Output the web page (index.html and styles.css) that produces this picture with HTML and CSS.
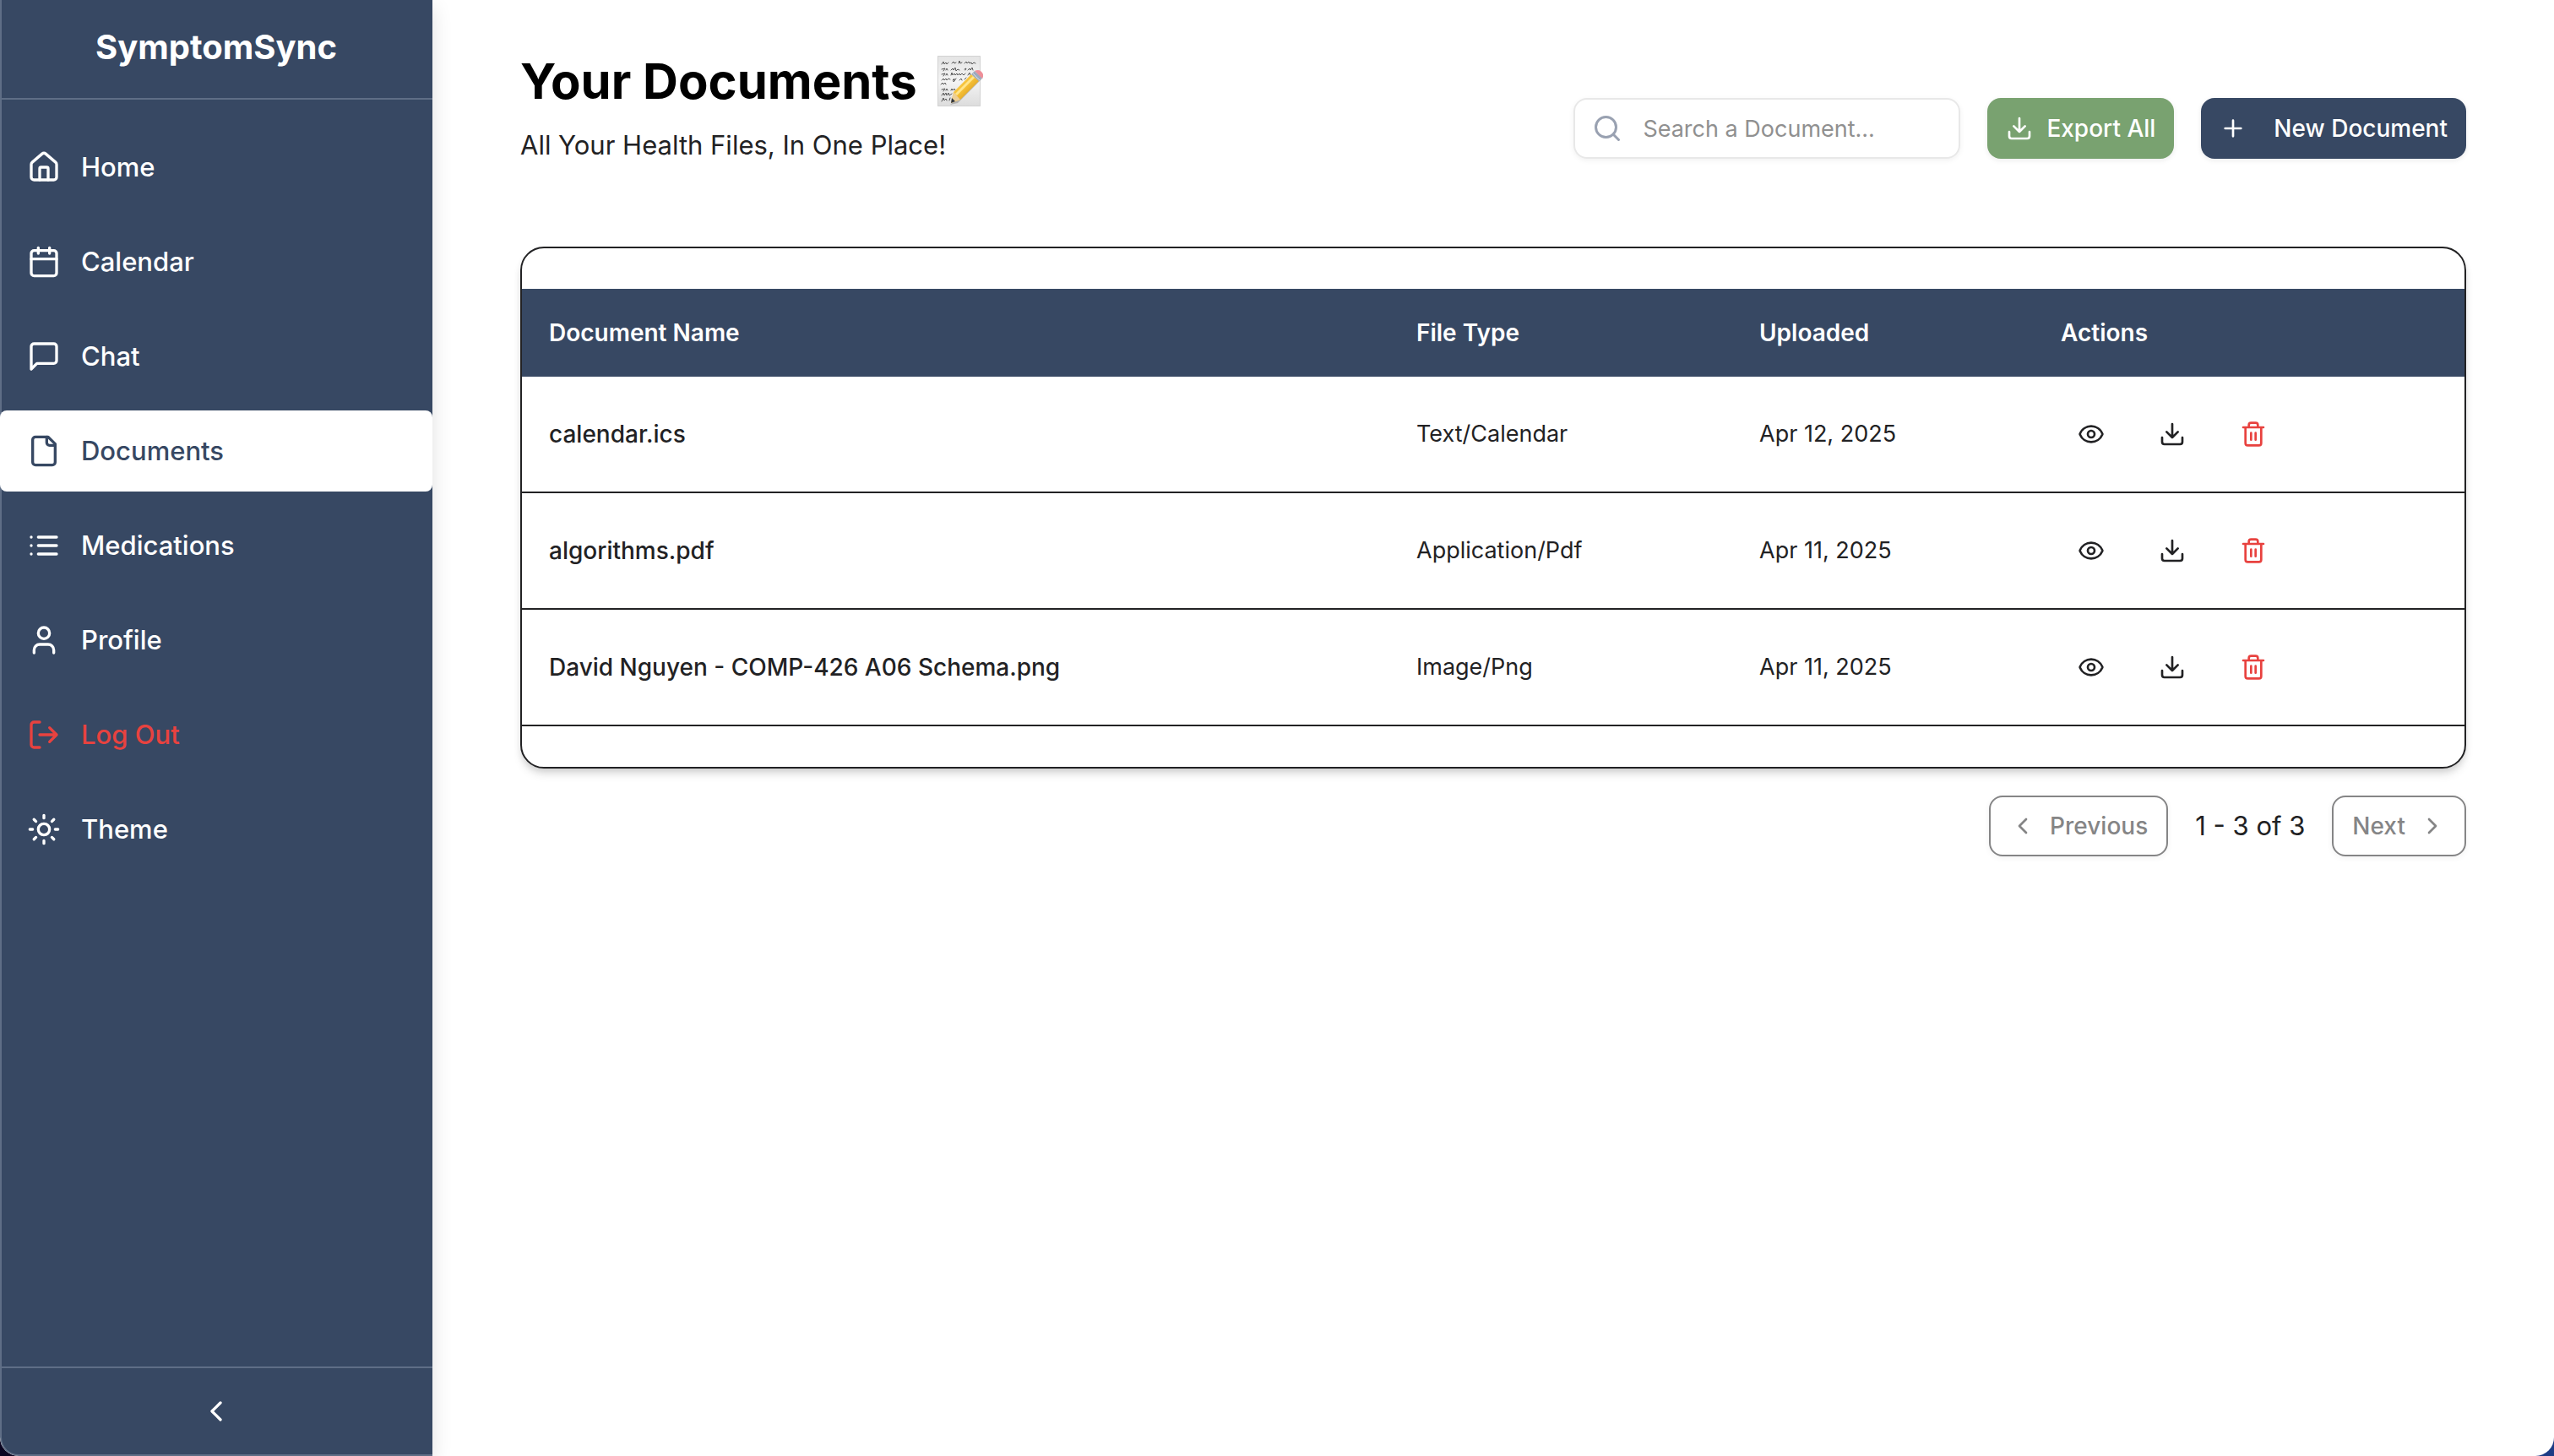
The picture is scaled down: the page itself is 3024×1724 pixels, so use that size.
FILE: index.html
```html
<!DOCTYPE html>
<html lang="en">
<head>
  <meta charset="utf-8">
  <meta name="viewport" content="width=device-width, initial-scale=1">
  <title>SymptomSync – Your Documents</title>
  <link rel="stylesheet" href="styles.css">
</head>
<body>
  <svg class="sprite" aria-hidden="true">
    <symbol id="home" viewBox="0 0 24 24"><path d="M15 21v-8a1 1 0 0 0-1-1h-4a1 1 0 0 0-1 1v8"/><path d="M3 10a2 2 0 0 1 .709-1.528l7-5.999a2 2 0 0 1 2.582 0l7 5.999A2 2 0 0 1 21 10v9a2 2 0 0 1-2 2H5a2 2 0 0 1-2-2z"/></symbol>
    <symbol id="calendar" viewBox="0 0 24 24"><path d="M8 2v4M16 2v4M3 10h18"/><rect x="3" y="4" width="18" height="18" rx="2"/></symbol>
    <symbol id="chat" viewBox="0 0 24 24"><path d="M21 15a2 2 0 0 1-2 2H7l-4 4V5a2 2 0 0 1 2-2h14a2 2 0 0 1 2 2z"/></symbol>
    <symbol id="file" viewBox="0 0 24 24"><path d="M15 2H6a2 2 0 0 0-2 2v16a2 2 0 0 0 2 2h12a2 2 0 0 0 2-2V7Z"/><path d="M14 2v4a2 2 0 0 0 2 2h4"/></symbol>
    <symbol id="list" viewBox="0 0 24 24"><path d="M3 12h.01M3 18h.01M3 6h.01M8 12h13M8 18h13M8 6h13"/></symbol>
    <symbol id="user" viewBox="0 0 24 24"><path d="M19 21v-2a4 4 0 0 0-4-4H9a4 4 0 0 0-4 4v2"/><circle cx="12" cy="7" r="4"/></symbol>
    <symbol id="logout" viewBox="0 0 24 24"><path d="M9 21H5a2 2 0 0 1-2-2V5a2 2 0 0 1 2-2h4M16 17l5-5-5-5M21 12H9"/></symbol>
    <symbol id="sun" viewBox="0 0 24 24"><circle cx="12" cy="12" r="4"/><path d="M12 2v2M12 20v2M4.93 4.93l1.41 1.41M17.66 17.66l1.41 1.41M2 12h2M20 12h2M6.34 17.66l-1.41 1.41M19.07 4.93l-1.41 1.41"/></symbol>
    <symbol id="left" viewBox="0 0 24 24"><path d="m15 18-6-6 6-6"/></symbol>
    <symbol id="right" viewBox="0 0 24 24"><path d="m9 18 6-6-6-6"/></symbol>
    <symbol id="search" viewBox="0 0 24 24"><circle cx="11" cy="11" r="8"/><path d="m21 21-4.3-4.3"/></symbol>
    <symbol id="download" viewBox="0 0 24 24"><path d="M21 15v4a2 2 0 0 1-2 2H5a2 2 0 0 1-2-2v-4M7 10l5 5 5-5M12 15V3"/></symbol>
    <symbol id="plus" viewBox="0 0 24 24"><path d="M5 12h14M12 5v14"/></symbol>
    <symbol id="eye" viewBox="0 0 24 24"><path d="M2.062 12.348a1 1 0 0 1 0-.696 10.75 10.75 0 0 1 19.876 0 1 1 0 0 1 0 .696 10.75 10.75 0 0 1-19.876 0"/><circle cx="12" cy="12" r="3"/></symbol>
    <symbol id="trash" viewBox="0 0 24 24"><path d="M3 6h18M19 6v14a2 2 0 0 1-2 2H7a2 2 0 0 1-2-2V6M8 6V4a2 2 0 0 1 2-2h4a2 2 0 0 1 2 2v2M10 11v6M14 11v6"/></symbol>
  </svg>

  <div class="app">
    <aside class="sidebar">
      <div class="brand">SymptomSync</div>
      <nav class="nav">
        <a class="nav-item" href="#home"><svg class="icon icon-lg"><use href="#home"/></svg>Home</a>
        <a class="nav-item" href="#calendar"><svg class="icon icon-lg"><use href="#calendar"/></svg>Calendar</a>
        <a class="nav-item" href="#chat"><svg class="icon icon-lg"><use href="#chat"/></svg>Chat</a>
        <a class="nav-item active" href="#documents" aria-current="page"><svg class="icon icon-lg"><use href="#file"/></svg>Documents</a>
        <a class="nav-item" href="#medications"><svg class="icon icon-lg"><use href="#list"/></svg>Medications</a>
        <a class="nav-item" href="#profile"><svg class="icon icon-lg"><use href="#user"/></svg>Profile</a>
        <button class="nav-item danger" type="button"><svg class="icon icon-lg"><use href="#logout"/></svg>Log Out</button>
        <button class="nav-item" type="button"><svg class="icon icon-lg"><use href="#sun"/></svg>Theme</button>
      </nav>
      <button class="collapse" type="button" aria-label="Collapse sidebar"><svg class="icon icon-lg"><use href="#left"/></svg></button>
    </aside>

    <main class="main">
      <header class="page-header">
        <div>
          <h1 class="title">Your Documents
            <svg class="memo" viewBox="0 0 54 60" role="img" aria-label="Memo">
              <defs>
                <linearGradient id="paper" x1="0" y1="0" x2="0" y2="1"><stop offset="0" stop-color="#e4e4e4"/><stop offset=".5" stop-color="#f4f4f4"/><stop offset="1" stop-color="#dcdcdc"/></linearGradient>
                <linearGradient id="wood" x1="0" y1="0" x2="1" y2="1"><stop offset="0" stop-color="#ffdc63"/><stop offset=".5" stop-color="#f4bd33"/><stop offset="1" stop-color="#b9801a"/></linearGradient>
              </defs>
              <path d="M0 0h51v60H0z" fill="url(#paper)"/>
              <path d="M.5.5h50v59H.5z" fill="none" stroke="#d2d2d2"/>
              <g fill="none" stroke="#555" stroke-width="1" stroke-linecap="round" stroke-linejoin="round">
                <path d="M5 10l2-3 1 3 2-2 1 2 2-2M17 9l2-2 1 2 2-1M25 9l1-3 1 3 2-1M32 9l2-2 1 2 2-2 1 2 2-1 1 2 2-2 2 1"/>
                <path d="M5 16l4-1-2 3M10 17l1-2 1 2M16 17l2-2 1 2 2-3 1 4 2-2 2 1M32 16l2-1-1 2M36 17l2-2 1 2 2-3 1 3"/>
                <path d="M5 22l4-1-2 3M10 23l1-2 1 2M16 23l1-3 1 3 2-2 1 2 2-2 1 2 2-2 1 2 2-2 2 2 2-2M36 23l2-3 1 3"/>
                <path d="M5 29l2-2 1 2 2-2 1 2 2-2 2 1M18 29l2-2-1 4 3-4M26 29l2-2 1 2M32 28l2-2"/>
                <path d="M4 34l2-2 1 2 2-2 1 2"/>
                <path d="M5 40l4-1-2 3M10 41l1-2 1 2M16 41l1-2 1 2 2-2 1 2"/>
                <path d="M5 47l2-3 1 3 2-3 1 3 2-3 1 3 3-2"/>
                <path d="M5 54l2-4 1 3 2-2 1 2M14 53l1-3"/>
              </g>
              <path d="M15 58l9-2 30-30-5 1z" fill="#777" opacity=".45"/>
              <path d="M16 56l3-13L40 22l9 8-22 22z" fill="url(#wood)"/>
              <path d="M22 46l21-21" stroke="#ffe58b" stroke-width="3"/>
              <path d="M16 56l3-13 8 9z" fill="#edcf98"/>
              <path d="M16 56l1-6 4 4z" fill="#30363f"/>
              <path d="M40 22l4-4 9 8-4 4z" fill="#9eabbd"/>
              <path d="M42 21l8 8" stroke="#d6dde7" stroke-width="1"/>
              <path d="M44 18q4-2 7 0 4 3 3 7l-1 2z" fill="#ee8f99"/>
            </svg>
          </h1>
          <p class="subtitle">All Your Health Files, In One Place!</p>
        </div>
        <div class="toolbar">
          <label class="search">
            <svg class="icon icon-search" aria-hidden="true"><use href="#search"/></svg>
            <input class="search-input" type="search" placeholder="Search a Document..." aria-label="Search a Document">
          </label>
          <button class="btn btn-green" type="button"><svg class="icon"><use href="#download"/></svg>Export All</button>
          <button class="btn btn-navy" type="button"><svg class="icon"><use href="#plus"/></svg>New Document</button>
        </div>
      </header>

      <section class="card">
        <table class="documents">
          <colgroup><col><col class="col-type"><col class="col-date"><col class="col-actions"></colgroup>
          <thead>
            <tr><th scope="col">Document Name</th><th scope="col">File Type</th><th scope="col">Uploaded</th><th scope="col">Actions</th></tr>
          </thead>
          <tbody>
            <tr>
              <td class="name">calendar.ics</td><td>Text/Calendar</td><td>Apr 12, 2025</td>
              <td><div class="actions">
                <button class="icon-btn" type="button" aria-label="View"><svg class="icon"><use href="#eye"/></svg></button>
                <button class="icon-btn" type="button" aria-label="Download"><svg class="icon"><use href="#download"/></svg></button>
                <button class="icon-btn danger" type="button" aria-label="Delete"><svg class="icon"><use href="#trash"/></svg></button>
              </div></td>
            </tr>
            <tr>
              <td class="name">algorithms.pdf</td><td>Application/Pdf</td><td>Apr 11, 2025</td>
              <td><div class="actions">
                <button class="icon-btn" type="button" aria-label="View"><svg class="icon"><use href="#eye"/></svg></button>
                <button class="icon-btn" type="button" aria-label="Download"><svg class="icon"><use href="#download"/></svg></button>
                <button class="icon-btn danger" type="button" aria-label="Delete"><svg class="icon"><use href="#trash"/></svg></button>
              </div></td>
            </tr>
            <tr>
              <td class="name">David Nguyen - COMP-426 A06 Schema.png</td><td>Image/Png</td><td>Apr 11, 2025</td>
              <td><div class="actions">
                <button class="icon-btn" type="button" aria-label="View"><svg class="icon"><use href="#eye"/></svg></button>
                <button class="icon-btn" type="button" aria-label="Download"><svg class="icon"><use href="#download"/></svg></button>
                <button class="icon-btn danger" type="button" aria-label="Delete"><svg class="icon"><use href="#trash"/></svg></button>
              </div></td>
            </tr>
          </tbody>
        </table>
      </section>

      <div class="pagination">
        <button class="btn btn-outline" type="button" disabled><svg class="icon"><use href="#left"/></svg>Previous</button>
        <span class="range">1 - 3 of 3</span>
        <button class="btn btn-outline" type="button" disabled>Next<svg class="icon"><use href="#right"/></svg></button>
      </div>
    </main>
  </div>
</body>
</html>
```
FILE: styles.css
```css
:root {
  --navy: #374863;
  --navy-line: #5f6e86;
  --green: #79a270;
  --ink: #222224;
  --red: #e8423f;
}

*,
*::before,
*::after {
  box-sizing: border-box;
}

body {
  margin: 0;
  background: linear-gradient(90deg, #0a0420, #1c3c85);
  color: var(--ink);
  font-family: Inter, "Liberation Sans", sans-serif;
  font-size: 28px;
  line-height: 40px;
}

button,
input {
  font: inherit;
  color: inherit;
}

button {
  border: 0;
  background: none;
}

.sprite {
  display: none;
}

.icon {
  flex: none;
  width: 32px;
  height: 32px;
  fill: none;
  stroke: currentColor;
  stroke-width: 2;
  stroke-linecap: round;
  stroke-linejoin: round;
}

.icon-lg {
  width: 40px;
  height: 40px;
}

.icon-search {
  width: 36px;
  height: 36px;
  color: #99a1b1;
}

.app {
  display: flex;
  min-height: 100vh;
  overflow: hidden;
  border-radius: 0 0 22px 22px;
  background: #fff;
}

/* Sidebar */

.sidebar {
  display: flex;
  flex: none;
  flex-direction: column;
  width: 512px;
  border: solid var(--navy-line);
  border-width: 0 0 2px 2px;
  border-bottom-left-radius: 22px;
  background: var(--navy);
  color: #fff;
  box-shadow: 0 8px 24px rgba(0, 0, 0, 0.12);
}

.brand,
.nav,
.collapse {
  margin-left: -2px;
}

.brand {
  padding: 32px 0 36px;
  border-bottom: 2px solid var(--navy-line);
  font-size: 40px;
  font-weight: 700;
  line-height: 48px;
  text-align: center;
}

.nav {
  display: flex;
  flex: 1;
  flex-direction: column;
  gap: 16px;
  padding-top: 32px;
}

.nav-item {
  display: flex;
  align-items: center;
  gap: 24px;
  height: 96px;
  padding: 0 32px;
  border-radius: 8px;
  font-size: 31px;
  font-weight: 500;
  color: inherit;
  text-decoration: none;
}

.nav-item.active {
  background: #fff;
  color: var(--navy);
}

.nav-item.danger,
.icon-btn.danger {
  color: var(--red);
}

.collapse {
  display: flex;
  align-items: center;
  justify-content: center;
  height: 104px;
  border-top: 2px solid var(--navy-line);
}

/* Page */

.main {
  flex: 1;
  min-width: 0;
  padding: 60px 104px;
}

.page-header {
  display: flex;
  align-items: center;
  justify-content: space-between;
  gap: 32px;
  margin-bottom: 96px;
}

.title {
  display: flex;
  align-items: center;
  gap: 24px;
  margin: 0;
  color: #000;
  font-size: 58px;
  font-weight: 700;
  line-height: 72px;
}

.memo {
  width: 54px;
  height: 60px;
}

.subtitle {
  margin: 16px 0 0;
  font-size: 31px;
  line-height: 48px;
}

.toolbar {
  display: flex;
  gap: 32px;
  padding-top: 48px;
}

.search {
  display: flex;
  align-items: center;
  gap: 24px;
  width: 458px;
  height: 72px;
  padding: 0 20px;
  border: 2px solid #e8e8e8;
  border-radius: 16px;
  box-shadow: 0 2px 6px rgba(0, 0, 0, 0.06);
}

.search-input {
  flex: 1;
  min-width: 0;
  padding: 2px 0 0;
  border: 0;
  outline: 0;
  background: none;
  font-size: 27px;
}

.search-input::placeholder {
  color: #909090;
  opacity: 1;
}

.btn {
  display: flex;
  align-items: center;
  gap: 16px;
  height: 72px;
  padding: 0 22px;
  border-radius: 16px;
  font-weight: 500;
  white-space: nowrap;
  box-shadow: 0 2px 6px rgba(0, 0, 0, 0.08);
}

.btn-green {
  background: var(--green);
  color: #fff;
}

.btn-navy {
  gap: 32px;
  background: var(--navy);
  color: #fff;
}

.btn-outline {
  border: 2px solid var(--ink);
  opacity: 0.55;
}

.card {
  padding: 48px 0;
  border: 2px solid var(--ink);
  border-radius: 28px;
  box-shadow: 0 8px 12px -2px rgba(0, 0, 0, 0.12), 0 4px 8px -2px rgba(0, 0, 0, 0.12);
}

.documents {
  width: 100%;
  table-layout: fixed;
  border-collapse: separate;
  border-spacing: 0;
  text-align: left;
}

.col-type {
  width: 406px;
}

.col-date {
  width: 357px;
}

.col-actions {
  width: 510px;
}

.documents th {
  height: 104px;
  padding: 0 32px;
  background: var(--navy);
  color: #fff;
  font-weight: 600;
}

.documents td {
  height: 138px;
  padding: 0 32px;
  border-bottom: 2px solid var(--ink);
  font-size: 27px;
}

.documents .name {
  font-size: 28px;
  font-weight: 500;
}

.actions {
  display: flex;
  gap: 24px;
}

.icon-btn {
  display: flex;
  align-items: center;
  justify-content: center;
  width: 72px;
  height: 72px;
  padding: 0;
}

.pagination {
  display: flex;
  align-items: center;
  justify-content: flex-end;
  gap: 32px;
  margin-top: 32px;
}

.range {
  font-size: 31px;
}
```
